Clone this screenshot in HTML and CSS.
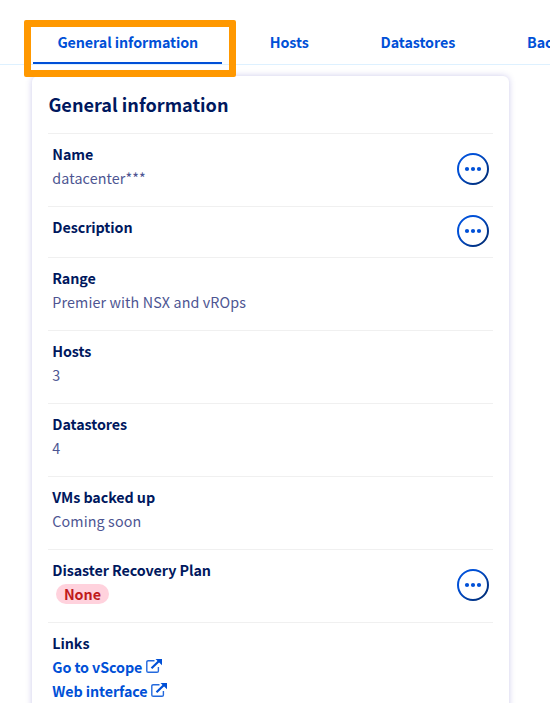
FILE: index.html
```html
<!DOCTYPE html>
<html lang="en">
<head>
<meta charset="utf-8">
<title>General information</title>
<link rel="stylesheet" href="styles.css">
</head>
<body>
<svg class="defs" width="0" height="0" aria-hidden="true">
  <defs>
    <linearGradient id="ring" x1="0" y1="0" x2="1" y2="1"><stop offset="0.3" stop-color="#0050d7"/><stop offset="0.85" stop-color="#00307f"/></linearGradient>
    <symbol id="more" viewBox="0 0 32 32">
      <circle cx="16" cy="16" r="15" fill="#fff" stroke="url(#ring)" stroke-width="2"/>
      <g fill="#0050d7"><circle cx="10" cy="16" r="2.1"/><circle cx="16" cy="16" r="2.1"/><circle cx="22" cy="16" r="2.1"/></g>
    </symbol>
    <symbol id="external" viewBox="0 0 16 16">
      <path d="M8.500 1.700H2.200Q.8 1.700 .8 3.100V11.900Q.8 13.300 2.200 13.300H11Q12.400 13.300 12.400 11.900V8" fill="none" stroke="#2369dd" stroke-width="1.400"/>
      <path d="M5.500 9.300L13 2" fill="none" stroke="#0050d7" stroke-width="2.200"/>
      <path d="M9.500 0H16V6.300Z" fill="#0050d7"/>
    </symbol>
  </defs>
</svg>
<nav class="tabs">
  <a class="tab tab-active">General information</a>
  <a class="tab">Hosts</a>
  <a class="tab">Datastores</a>
  <a class="tab">Backup</a>
</nav>
<main class="card">
  <h1>General information</h1>
  <section class="row"><div><h2>Name</h2><p>datacenter***</p></div><svg class="more"><use href="#more"/></svg></section>
  <section class="row row-short"><div><h2>Description</h2></div><svg class="more"><use href="#more"/></svg></section>
  <section class="row"><div><h2>Range</h2><p>Premier with NSX and vROps</p></div></section>
  <section class="row"><div><h2>Hosts</h2><p>3</p></div></section>
  <section class="row"><div><h2>Datastores</h2><p>4</p></div></section>
  <section class="row"><div><h2>VMs backed up</h2><p>Coming soon</p></div></section>
  <section class="row"><div><h2>Disaster Recovery Plan</h2><span class="badge">None</span></div><svg class="more"><use href="#more"/></svg></section>
  <section class="row row-links"><div><h2>Links</h2>
    <a class="link">Go to vScope<svg class="external"><use href="#external"/></svg></a>
    <a class="link">Web interface<svg class="external"><use href="#external"/></svg></a></div></section>
</main>
<div class="highlight"></div>
</body>
</html>
```
FILE: styles.css
```css
* { box-sizing: border-box; }
html { overflow: hidden; }
body { margin: 0; height: 703px; overflow: hidden; position: relative; background: #fff; color: #00185e; font: 14.3px/24px "Noto Sans CJK SC", "Noto Sans", sans-serif; }
.defs { display: block; height: 0; }
.tabs { display: flex; gap: 24px; height: 65px; padding: 22px 0 0 33px; overflow: hidden; border-bottom: 1px solid #def1ff; }
.tab { flex: none; height: 42px; padding: 8px 24px 0 23.8px; color: #0050d7; font-weight: 700; letter-spacing: -.08px; white-space: nowrap; }
.tab-active { width: 189px; padding-left: 24.4px; border-bottom: 2px solid #0050d7; }
.card { width: 477px; height: 640px; margin: 11px 0 0 32px; padding: 0 16px; border-radius: 6px 6px 0 0; background: #fff; box-shadow: 0 0 6px rgba(60, 50, 180, .25); }
h1 { height: 57px; margin: 0; padding: 16px 0 0 .4px; font-size: 18.1px; line-height: 24px; }
h2, p { margin: 0; font-size: inherit; line-height: 24px; }
h2 { letter-spacing: -.07px; }
p { color: #4d5592; letter-spacing: .12px; }
.row { display: flex; justify-content: space-between; height: 73px; padding: 8px 4px 0 4.3px; border-top: 1px solid #f0f0f0; }
.row-short { height: 51px; }
.row-links { height: 80px; }
.more { width: 32px; height: 32px; margin-top: 11px; }
.row-short .more { margin-top: 0; }
.badge { display: block; width: 53px; height: 20px; margin: 2px 0 0 3.7px; border-radius: 10px; background: #ffd2dd; color: #c11b1b; font-weight: 700; line-height: 20px; text-align: center; }
.link { display: flex; align-items: flex-start; height: 24px; color: #0050d7; font-weight: 700; letter-spacing: -.1px; }
.external { width: 16px; height: 16px; margin: 4px 0 0 3.5px; }
.highlight { position: absolute; left: 24px; top: 20px; width: 212px; height: 57px; border: 7px solid #ff9800; border-radius: 2px; }
```
